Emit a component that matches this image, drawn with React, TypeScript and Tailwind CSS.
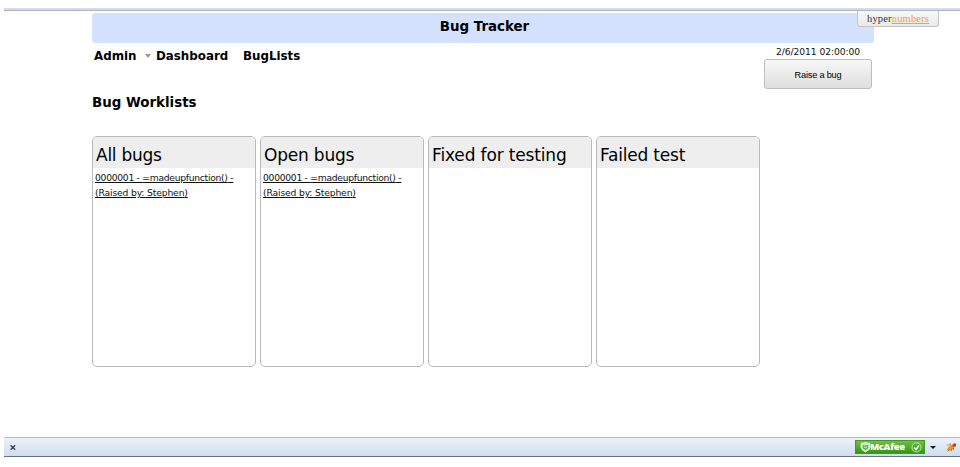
import React from "react";

type Bug = { id: string; title: string; raisedBy: string };
type Worklist = { name: string; bugs: Bug[]; tracking: string };

const bug: Bug = { id: "0000001", title: "=madeupfunction()", raisedBy: "Stephen" };

const worklists: Worklist[] = [
  { name: "All bugs", bugs: [bug], tracking: "tracking-[-0.25px]" },
  { name: "Open bugs", bugs: [bug], tracking: "tracking-[-0.2px]" },
  { name: "Fixed for testing", bugs: [], tracking: "tracking-[-0.15px]" },
  { name: "Failed test", bugs: [], tracking: "tracking-[-0.2px]" },
];

function WorklistCard({ list }: { list: Worklist }) {
  return (
    <section className="h-[231px] w-[164px] overflow-hidden rounded-[5px] border border-[#b9b9b9] bg-white">
      <h3 className={`h-[31px] whitespace-nowrap bg-[#eeeeee] pl-[3px] pt-[6px] text-[17px] leading-6 ${list.tracking}`}>
        {list.name}
      </h3>
      {list.bugs.map((b) => (
        <a key={b.id} className="block whitespace-nowrap pl-[2px] pt-[2px] text-[9.2px] leading-[15px] text-[#111] underline">
          <span className="tracking-[-0.28px]">{b.id} - {b.title} -</span>
          <br />
          <span className="tracking-[-0.14px]">(Raised by: {b.raisedBy})</span>
        </a>
      ))}
    </section>
  );
}

function McAfeeBadge() {
  return (
    <div className="flex h-[14px] w-[70px] items-center border border-[#3f9b1c] bg-linear-to-b from-[#72bd48] to-[#319908] pl-1">
      <svg width="11" height="12" viewBox="0 0 11 12">
        <path d="M1 2.2 Q3.5 2.4 5.5 1.2 Q7.5 2.4 10 2.2 V6.5 Q9.5 9.3 5.5 11 Q1.5 9.3 1 6.5Z" fill="#cfe9c4" stroke="#e4f5dc" strokeWidth=".8" />
        <path d="M3.3 4 V6.8 L5.5 8.3 L7.7 6.8 V4 M4.4 4.5 L5.5 5.6 L6.6 4.5" fill="none" stroke="#5da643" strokeWidth="1.1" />
      </svg>
      <span className="-ml-px mr-px w-[35px] whitespace-nowrap font-['Open_Sans',sans-serif] text-[9.5px] font-extrabold leading-3 tracking-[-0.35px] text-white">McAfee</span>
      <svg className="ml-[5px]" width="11" height="11" viewBox="0 0 11 11">
        <circle cx="5.5" cy="5.5" r="4.5" fill="#4caf2e" stroke="#b5e3a4" strokeWidth="1.1" />
        <path d="M3.1 5.6 L5 7.4 L8 3.5" fill="none" stroke="white" strokeWidth="1.4" />
      </svg>
    </div>
  );
}

export default function App() {
  return (
    <div className="flex h-[467px] w-[960px] flex-col overflow-hidden bg-white pl-1 pt-2 font-['DejaVu_Sans',Verdana,sans-serif] text-black">
      <div className="h-[3px] shrink-0 border-b border-[#b0b5bf] bg-[#d2deee]" />
      <main className="relative h-[426px] shrink-0 pl-[88px] pt-[2px]">
        <header className="h-[30px] w-[782px] rounded-[3px] bg-[#d4e1ff] pl-[3px] pt-[4px] text-center text-[13.4px] font-bold leading-5">
          <h1>Bug Tracker</h1>
        </header>
        <div className="absolute right-[21px] top-0 h-[16px] w-[82px] rounded-b-[3px] border border-t-0 border-[#c4c4c4] bg-linear-to-b from-[#f8f8f8] to-[#e9e9e9] pl-[9px] font-['Liberation_Serif',serif] text-[10.5px] leading-[15px] tracking-[0.17px] text-[#333]">
          hyper<span className="text-[#f5a033] underline">numbers</span>
        </div>
        <div className="flex h-[93px] w-[780px] justify-between">
          <div>
            <nav className="flex h-[25px] items-center whitespace-nowrap pl-[2px] pt-[2px] text-[11.85px] font-bold">
              <a className="w-[51px]">Admin</a>
              <svg className="mr-[5px] -mt-[2px]" width="6" height="4" viewBox="0 0 6 4">
                <path d="M0 0h6L3 4z" fill="#999" />
              </svg>
              <a className="w-[87px]">Dashboard</a>
              <a>BugLists</a>
            </nav>
            <h2 className="mt-[25px] whitespace-nowrap text-[13.4px] font-bold leading-5">Bug Worklists</h2>
          </div>
          <div className="w-[108px]">
            <time className="block h-4 whitespace-nowrap text-center text-[9.2px] leading-[17px] tracking-[-0.08px] text-[#111]">2/6/2011 02:00:00</time>
            <button className="block h-[30px] w-[108px] rounded-[3px] border border-[#bdbdbd] bg-linear-to-b from-[#f7f7f7] to-[#dfdfdf] pt-[4px] font-['Liberation_Sans',sans-serif] text-[9.2px] leading-none tracking-[-0.2px]">
              Raise a bug
            </button>
          </div>
        </div>
        <div className="flex gap-1">
          {worklists.map((list) => (
            <WorklistCard key={list.name} list={list} />
          ))}
        </div>
      </main>
      <footer className="flex h-5 shrink-0 items-center border-b border-t border-b-[#667080] border-t-[#b4bbc5] bg-linear-to-b from-[#edf2f9] to-[#d0dcee] pl-[6px]">
        <svg width="6" height="5" viewBox="0 0 6 5">
          <path d="M.6 .3L5.2 4.7M5.2 .3L.6 4.7" stroke="#333" strokeWidth="1.3" />
        </svg>
        <div className="ml-auto flex items-center pr-[3px]">
          <McAfeeBadge />
          <svg className="ml-[5px] mr-[10px]" width="6" height="3" viewBox="0 0 6 3">
            <path d="M0 0h6L3 3z" fill="#111" />
          </svg>
          <svg width="11" height="11" viewBox="0 0 11 11">
            <path d="M0 2.5L3.5 2L6 4L4.5 5.5Z" fill="#e5b56b" />
            <path d="M.5 8L3 4.5L8 3.5L7.5 7L3 8.8Z" fill="#f0961e" />
            <path d="M5 4L8 1L10.5 2L9.5 4.5L7 5.5Z" fill="#d9701c" />
            <circle cx="8.6" cy="3.3" r="1.3" fill="#b53d1c" />
            <path d="M1.5 9.5L3.5 7.5M5 9.3L5.5 7M7.5 7.8L7.2 6M5 3L4 1.5" stroke="#7b4a28" strokeWidth=".7" />
          </svg>
        </div>
      </footer>
    </div>
  );
}
